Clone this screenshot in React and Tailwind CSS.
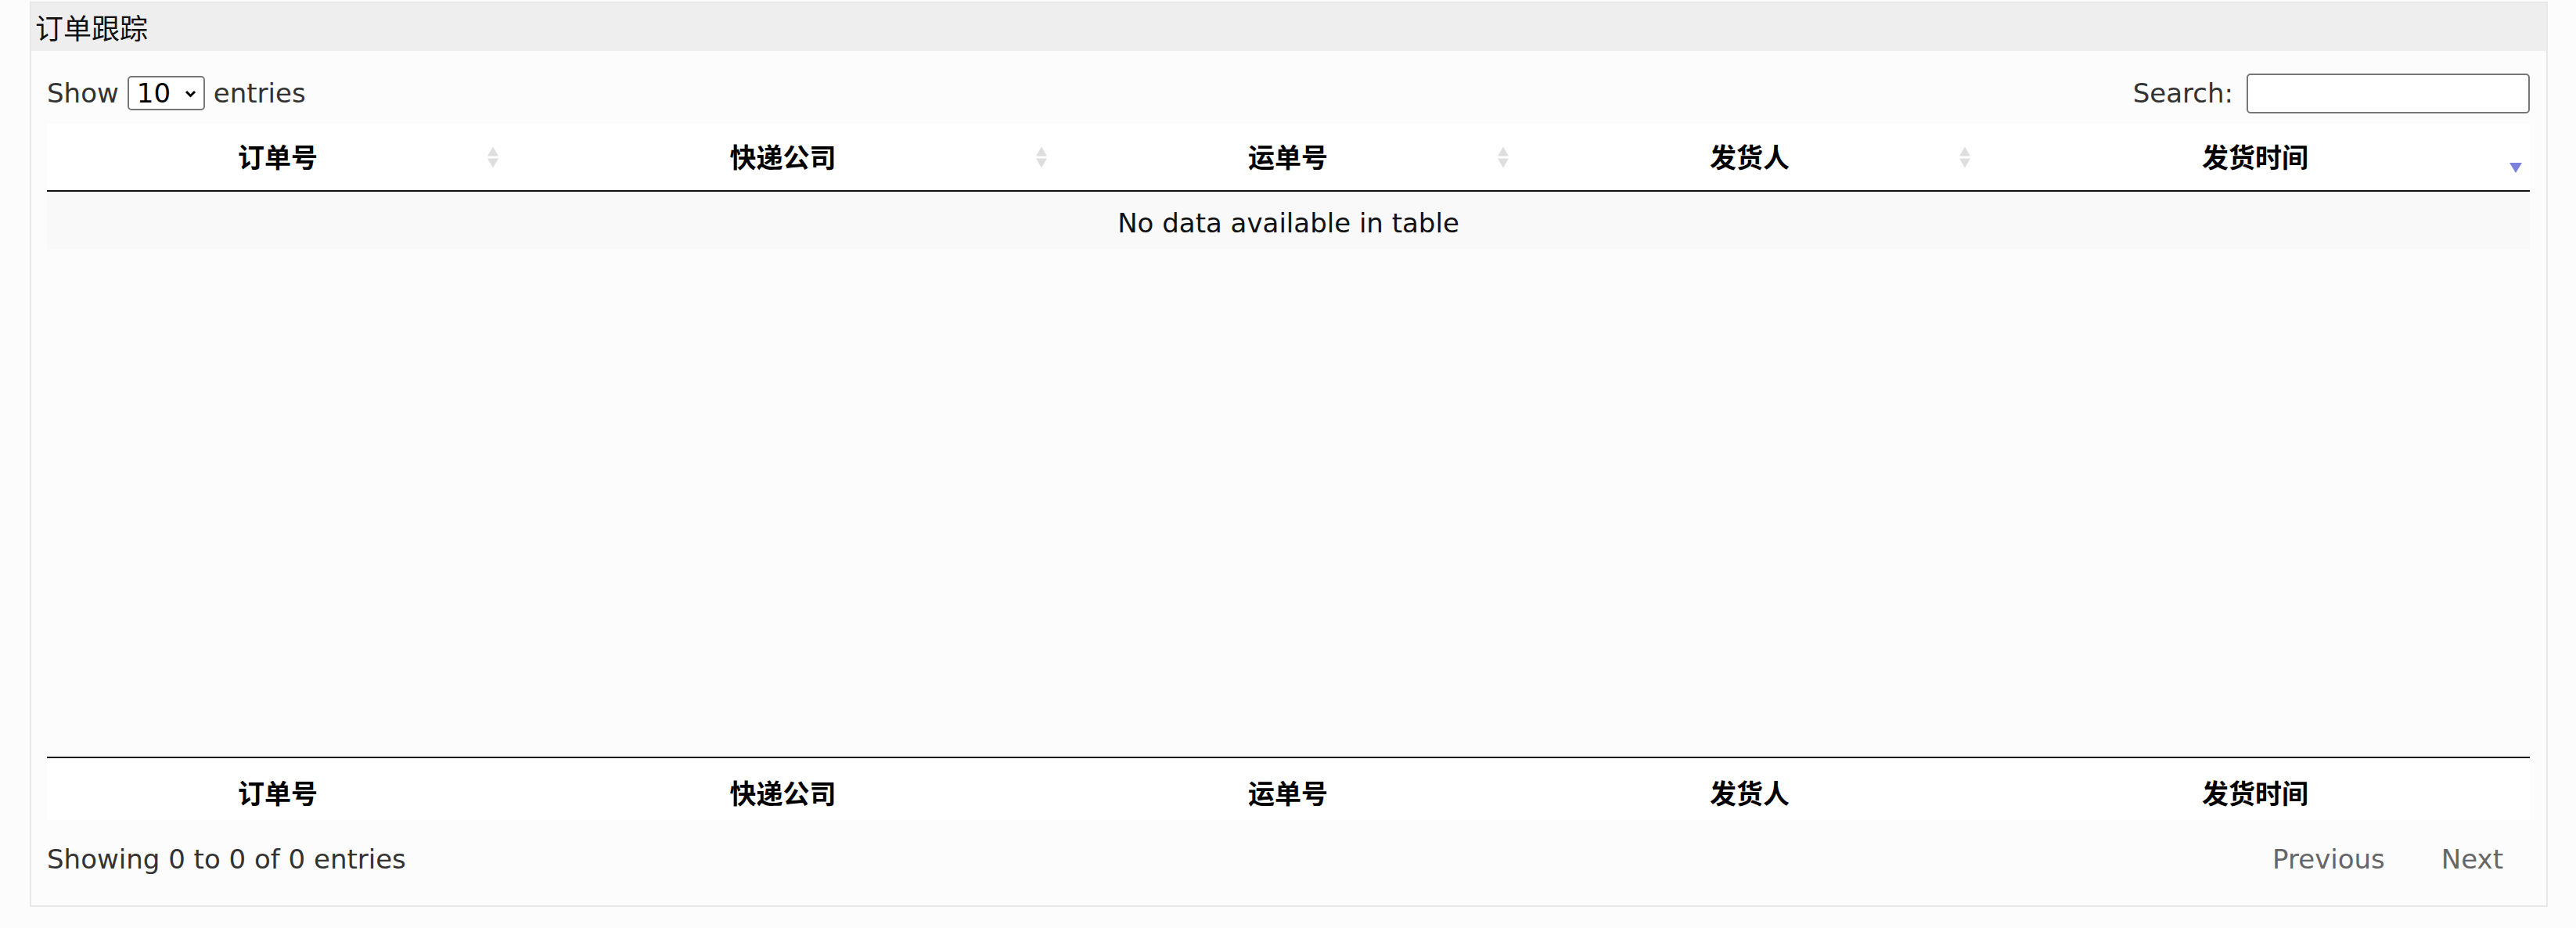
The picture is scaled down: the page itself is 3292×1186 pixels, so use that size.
import { useState } from 'react';

const FONT = { fontFamily: '"DejaVu Sans", "Noto Sans CJK SC", sans-serif' };

const COLS = [
  { key: 'orderNo', label: '订单号' },
  { key: 'courier', label: '快递公司' },
  { key: 'waybill', label: '运单号' },
  { key: 'sender', label: '发货人' },
  { key: 'shippedAt', label: '发货时间', sorted: 'desc' },
];

const GRID = 'grid grid-cols-[590px_701px_590px_590px_702px]';

function SortBoth() {
  return (
    <svg width="14" height="27" viewBox="0 0 14 27" className="absolute right-[13px] top-1/2 -translate-y-1/2">
      <polygon points="7,0 14,12 0,12" fill="#dedede" />
      <polygon points="0,15 14,15 7,27" fill="#dedede" />
    </svg>
  );
}

function SortDesc() {
  return (
    <svg width="16" height="13" viewBox="0 0 16 13" className="absolute right-[10px] top-[50px]">
      <polygon points="0,0 16,0 8,13" fill="#7b80dc" />
    </svg>
  );
}

function HeadRow() {
  return (
    <div className={`${GRID} h-[87px] bg-white border-b-2 border-[#111]`}>
      {COLS.map((c) => (
        <div key={c.key} className="relative flex items-center justify-center px-[22px] pt-[4px] font-bold text-[34px] text-black">
          {c.label}
          {c.sorted === 'desc' ? <SortDesc /> : <SortBoth />}
        </div>
      ))}
    </div>
  );
}

function FootRow() {
  return (
    <div className={`${GRID} h-[81px] bg-white border-t-2 border-[#111]`}>
      {COLS.map((c) => (
        <div key={c.key} className="flex items-center justify-center px-[22px] pt-[13px] font-bold text-[34px] text-black">
          {c.label}
        </div>
      ))}
    </div>
  );
}

export default function App() {
  const [pageSize, setPageSize] = useState('10');
  const [query, setQuery] = useState('');

  return (
    <div className="min-h-screen bg-[#fcfcfc] pt-[2px] pl-[38px] pr-[36px]" style={FONT}>
      <div className="border-2 border-[#e8e8e8] bg-[#fcfcfc]">
        {/* panel heading */}
        <div className="h-[61px] bg-[#eeeeee] pl-[5px] pt-[6px] flex items-center text-[36px] text-[#111]">
          订单跟踪
        </div>

        <div className="pl-[20px] pr-[21px]">
          {/* length + filter */}
          <div className="flex items-center justify-between pt-[32px] pb-[17px] h-[93px] text-[34px] text-[#333]">
            <label className="flex items-center">
              Show
              <span className="relative mx-[11px] inline-flex">
                <select
                  value={pageSize}
                  onChange={(e) => setPageSize(e.target.value)}
                  className="appearance-none w-[99px] h-[44px] border-2 border-[#767676] rounded-[5px] bg-white pl-[10px] text-[34px] leading-none text-black"
                  style={FONT}
                >
                  <option value="10">10</option>
                  <option value="25">25</option>
                  <option value="50">50</option>
                  <option value="100">100</option>
                </select>
                <svg width="15" height="10" viewBox="0 0 15 10" className="pointer-events-none absolute right-[11px] top-[18px]">
                  <polyline points="2,2 7.5,7.5 13,2" fill="none" stroke="#000" strokeWidth="3" />
                </svg>
              </span>
              entries
            </label>
            <label className="flex items-center">
              Search:
              <input
                value={query}
                onChange={(e) => setQuery(e.target.value)}
                className="ml-[17px] w-[362px] h-[51px] border-2 border-[#767676] rounded-[5px] bg-white outline-none px-[6px] text-[30px]"
              />
            </label>
          </div>

          {/* table */}
          <HeadRow />
          <div className="h-[722px]">
            <div className="h-[74px] bg-[#f9f9f9] pt-[6px] flex items-center justify-center text-[34px] text-[#111]">
              No data available in table
            </div>
          </div>
          <FootRow />

          {/* info + paging */}
          <div className="flex items-center justify-between h-[100px] mb-[9px] text-[34px]">
            <div className="text-[#333]">Showing 0 to 0 of 0 entries</div>
            <div className="flex items-center text-[#666]">
              <span className="px-[34px]">Previous</span>
              <span className="ml-[4px] px-[34px]">Next</span>
            </div>
          </div>
        </div>
      </div>
    </div>
  );
}
